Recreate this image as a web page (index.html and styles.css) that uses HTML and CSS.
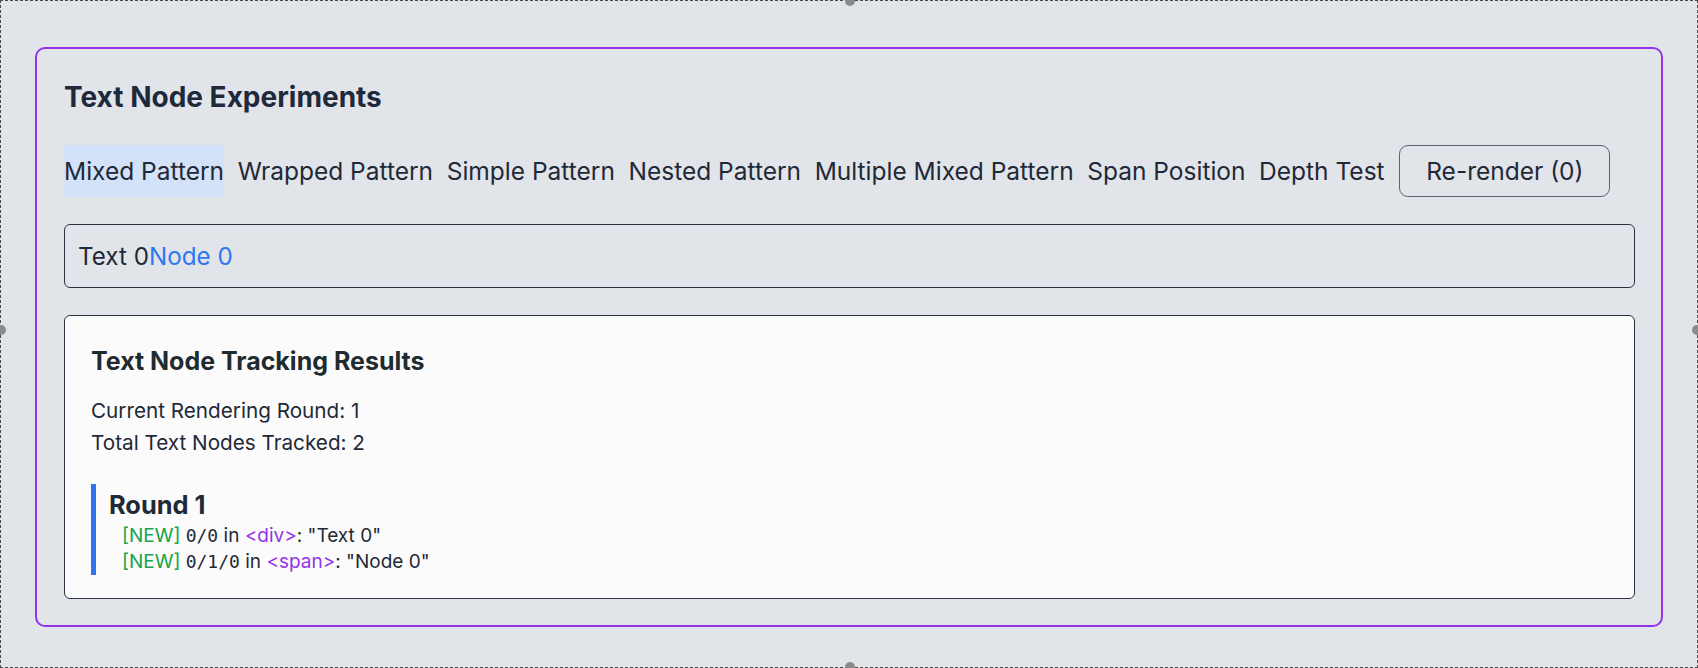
FILE: index.html
```html
<!DOCTYPE html>
<html lang="en">
<head>
<meta charset="utf-8">
<title>Text Node Experiments</title>
<link rel="stylesheet" href="styles.css">
</head>
<body>
<div class="frame">
  <span class="handle handle-top"></span>
  <span class="handle handle-left"></span>
  <span class="handle handle-right"></span>
  <span class="handle handle-bottom"></span>
  <section class="panel">
    <h2 class="title">Text Node Experiments</h2>
    <nav class="tabs">
      <button class="tab active">Mixed Pattern</button>
      <button class="tab">Wrapped Pattern</button>
      <button class="tab">Simple Pattern</button>
      <button class="tab">Nested Pattern</button>
      <button class="tab">Multiple Mixed Pattern</button>
      <button class="tab">Span Position</button>
      <button class="tab">Depth Test</button>
      <button class="rerender">Re-render (0)</button>
    </nav>
    <div class="sample">Text 0<span class="sample-span">Node 0</span></div>
    <div class="results">
      <h3 class="results-title">Text Node Tracking Results</h3>
      <div class="stat">Current Rendering Round: 1</div>
      <div class="stat">Total Text Nodes Tracked: 2</div>
      <div class="round">
        <h4 class="round-title">Round 1</h4>
        <div class="entry"><span class="tag-new">[NEW]</span> <code class="path">0/0</code> in <span class="tag-el">&lt;div&gt;</span>: "Text 0"</div>
        <div class="entry"><span class="tag-new">[NEW]</span> <code class="path">0/1/0</code> in <span class="tag-el">&lt;span&gt;</span>: "Node 0"</div>
      </div>
    </div>
  </section>
</div>
</body>
</html>
```
FILE: styles.css
```css
* { box-sizing: border-box; }
html, body { margin: 0; padding: 0; }
body {
  background: #e1e4e9;
  font-family: Inter, "Noto Sans", sans-serif;
  color: #1f2937;
}
.frame {
  position: relative;
  width: 1698px;
  height: 668px;
  border: 1px dashed #4a4a4a;
  padding: 46px 34px 38px 34px;
}
.handle {
  position: absolute;
  width: 10px;
  height: 10px;
  border-radius: 50%;
  background: #8a8a8a;
}
.handle-top { top: -5px; left: 844px; }
.handle-bottom { bottom: -5px; left: 844px; }
.handle-left { left: -5px; top: 324px; }
.handle-right { right: -5px; top: 324px; }

.panel {
  border: 2px solid #9333ea;
  border-radius: 10px;
  padding: 31px 26px 26px 27px;
  display: flex;
  flex-direction: column;
}
.title {
  margin: 0;
  font-size: 28px;
  line-height: 34px;
  font-weight: 700;
  color: #1e293b;
}
.tabs {
  display: flex;
  align-items: center;
  gap: 13.6px;
  margin-top: 31px;
}
.tab {
  font: inherit;
  font-size: 24.5px;
  color: #1f2937;
  background: transparent;
  border: none;
  padding: 0;
  height: 52px;
  line-height: 52px;
}
.tab.active { background: #d3e2f8; }
.rerender {
  font: inherit;
  font-size: 24.5px;
  color: #1f2937;
  background: transparent;
  border: 1px solid #5b6472;
  border-radius: 9px;
  height: 52px;
  padding: 0 26px;
  margin-left: 1px;
}
.sample {
  margin-top: 27px;
  height: 64px;
  border: 1px solid #2a3140;
  border-radius: 6px;
  padding: 0 13px;
  display: flex;
  align-items: center;
  font-size: 24.2px;
}
.sample-span { color: #2f78f0; }
.results {
  margin-top: 27px;
  height: 284px;
  background: #fbfbfb;
  border: 1px solid #2a3140;
  border-radius: 6px;
  padding: 30px 26px 0 26px;
}
.results-title {
  margin: 0 0 19px 0;
  font-size: 25px;
  line-height: 30px;
  font-weight: 700;
  color: #1f2b2e;
}
.stat {
  font-size: 20.7px;
  line-height: 32px;
}
.round {
  margin-top: 25px;
  border-left: 5px solid #2f74f0;
  padding: 6px 0 0 13px;
}
.round-title {
  margin: 0 0 3px 0;
  font-size: 25.4px;
  line-height: 30px;
  font-weight: 700;
  color: #1f2937;
}
.entry {
  padding-left: 13px;
  font-size: 19px;
  line-height: 26px;
}
.tag-new { color: #16a34a; }
.tag-el { color: #9333ea; }
.path {
  font-family: "DejaVu Sans Mono", "Liberation Mono", monospace;
  font-size: 18px;
}
```
